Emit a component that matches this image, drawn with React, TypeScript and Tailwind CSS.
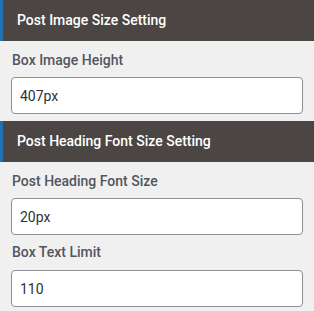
const font = { fontFamily: "Roboto, 'Liberation Sans', sans-serif" };

type Field = { label: string; value: string };

const sections: { title: string; fields: Field[] }[] = [
  {
    title: "Post Image Size Setting",
    fields: [{ label: "Box Image Height", value: "407px" }],
  },
  {
    title: "Post Heading Font Size Setting",
    fields: [
      { label: "Post Heading Font Size", value: "20px" },
      { label: "Box Text Limit", value: "110" },
    ],
  },
];

function SettingInput({ label, value, first }: Field & { first: boolean }) {
  return (
    <div className={first ? "pt-[9px]" : "pt-[7px]"}>
      <div className="text-[14px] leading-5 font-medium text-[#50575e] pl-[12px]">{label}</div>
      <div className={first ? "mt-[7px] px-[11px]" : "mt-[8px] px-[11px]"}>
        <input
          type="text"
          defaultValue={value}
          className="w-[292px] h-[37px] bg-white border border-[#8c8f94] rounded-[4px] px-[8px] text-[14px] text-[#2c3338] outline-none"
          style={font}
        />
      </div>
    </div>
  );
}

export default function App() {
  return (
    <div className="w-[314px] h-[311px] bg-[#f0f0f1] overflow-hidden" style={font}>
      {sections.map((section, i) => (
        <div key={section.title} className={i > 0 ? "mt-[7px]" : ""}>
          <div className="h-[41px] bg-[#4b4644] border-l-[3px] border-[#2271b1] flex items-center pl-[14px] pb-[2px]">
            <span className="text-white text-[14px] font-medium leading-5">{section.title}</span>
          </div>
          {section.fields.map((f, j) => (
            <SettingInput key={f.label} {...f} first={j === 0} />
          ))}
        </div>
      ))}
    </div>
  );
}
